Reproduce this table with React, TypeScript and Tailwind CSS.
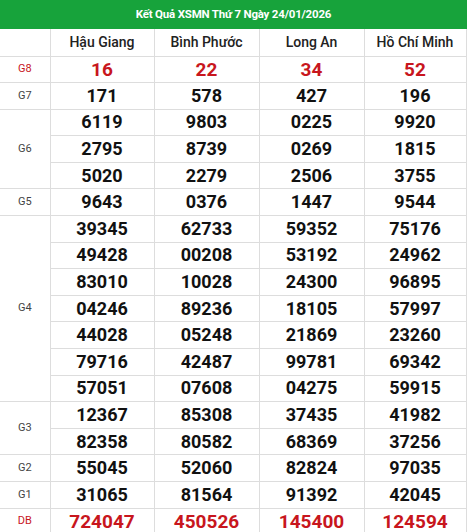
import React from "react";

type Prize = { label: string; rows: string[][]; red?: boolean };

const provinces = ["Hậu Giang", "Bình Phước", "Long An", "Hồ Chí Minh"];

// each prize: list of rows, each row = 4 province values
const prizes: Prize[] = [
  { label: "G8", red: true, rows: [["16", "22", "34", "52"]] },
  { label: "G7", rows: [["171", "578", "427", "196"]] },
  {
    label: "G6",
    rows: [
      ["6119", "9803", "0225", "9920"],
      ["2795", "8739", "0269", "1815"],
      ["5020", "2279", "2506", "3755"],
    ],
  },
  { label: "G5", rows: [["9643", "0376", "1447", "9544"]] },
  {
    label: "G4",
    rows: [
      ["39345", "62733", "59352", "75176"],
      ["49428", "00208", "53192", "24962"],
      ["83010", "10028", "24300", "96895"],
      ["04246", "89236", "18105", "57997"],
      ["44028", "05248", "21869", "23260"],
      ["79716", "42487", "99781", "69342"],
      ["57051", "07608", "04275", "59915"],
    ],
  },
  {
    label: "G3",
    rows: [
      ["12367", "85308", "37435", "41982"],
      ["82358", "80582", "68369", "37256"],
    ],
  },
  { label: "G2", rows: [["55045", "52060", "82824", "97035"]] },
  { label: "G1", rows: [["31065", "81564", "91392", "42045"]] },
  { label: "DB", red: true, rows: [["724047", "450526", "145400", "124594"]] },
];

export default function App() {
  return (
    <div
      className="w-[467px] h-[532px] overflow-hidden bg-white"
      style={{ fontFamily: "Roboto, 'Liberation Sans', sans-serif" }}
    >
      <div className="h-[29px] bg-[#17a33b] flex items-center justify-center">
        <span className="text-white text-[11.5px] font-bold tracking-[-0.2px]">
          Kết Quả XSMN Thứ 7 Ngày 24/01/2026
        </span>
      </div>
      <table className="w-[466px] border-collapse table-fixed">
        <colgroup>
          <col className="w-[50px]" />
          <col className="w-[104px]" />
          <col className="w-[105px]" />
          <col className="w-[105px]" />
          <col className="w-[102px]" />
        </colgroup>
        <thead>
          <tr className="h-[27px]">
            <th className="border border-[#dddddd] border-t-0 border-l-0"></th>
            {provinces.map((p) => (
              <th
                key={p}
                className="border border-[#dddddd] border-t-0 text-[14px] font-medium text-[#222] text-center"
              >
                {p}
              </th>
            ))}
          </tr>
        </thead>
        <tbody>
          {prizes.map((prize) =>
            prize.rows.map((vals, i) => (
              <tr key={prize.label + i} className="h-[26.6px]">
                {i === 0 && (
                  <td
                    rowSpan={prize.rows.length}
                    className={`border border-[#dddddd] border-l-0 text-center text-[11px] ${
                      prize.red ? "text-[#c8161d]" : "text-[#444]"
                    }`}
                  >
                    {prize.label}
                  </td>
                )}
                {vals.map((v, j) => (
                  <td
                    key={j}
                    className={`border border-[#dddddd] text-center font-bold leading-none ${
                      prize.red ? "text-[#c8161d]" : "text-[#111]"
                    } ${prize.label === "G8" || prize.label === "DB" ? "text-[19px]" : "text-[18px]"}`}
                  >
                    {v}
                  </td>
                ))}
              </tr>
            ))
          )}
        </tbody>
      </table>
    </div>
  );
}
